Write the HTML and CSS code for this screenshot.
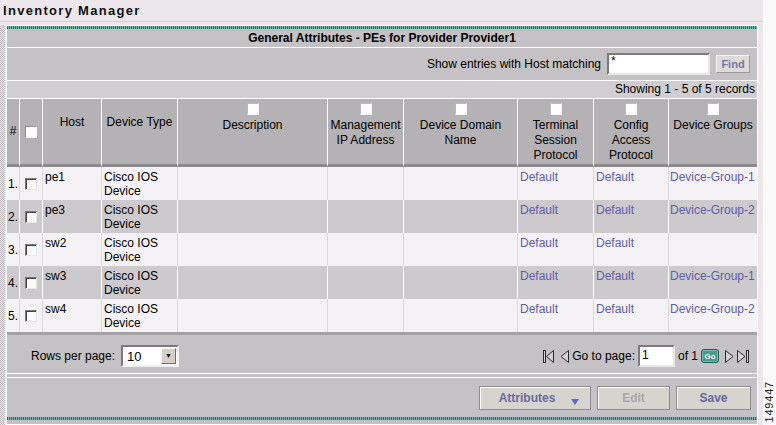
FILE: index.html
```html
<!DOCTYPE html>
<html lang="en">
<head>
    <meta charset="UTF-8">
    <title>Inventory Manager</title>
    <link rel="stylesheet" href="styles.css">
</head>
<body>
    <div class="page">
        <div class="title">Inventory Manager</div>
        <div class="main">
            <div class="rail"></div>
            <div class="panel">
                <div class="stripe"></div>
                <div class="caption">General Attributes - PEs for Provider Provider1</div>
                <div class="search">
                    <label for="host-filter">Show entries with Host matching</label>
                    <input type="text" id="host-filter" class="text-input filter" value="*">
                    <button class="find">Find</button>
                </div>
                <div class="count">Showing 1 - 5 of 5 records</div>

                <table class="grid">
                    <thead>
                        <tr class="head-row">
                            <th class="c-num mid">#</th>
                            <th class="c-sel mid"><span class="cb"></span></th>
                            <th class="c-host plain">Host</th>
                            <th class="c-type plain">Device Type</th>
                            <th class="c-desc"><span class="cb"></span>Description</th>
                            <th class="c-mgmt"><span class="cb"></span>Management<br>IP Address</th>
                            <th class="c-domain"><span class="cb"></span>Device Domain<br>Name</th>
                            <th class="c-term"><span class="cb"></span>Terminal<br>Session<br>Protocol</th>
                            <th class="c-cfg"><span class="cb"></span>Config<br>Access<br>Protocol</th>
                            <th class="c-grp"><span class="cb"></span>Device Groups</th>
                        </tr>
                    </thead>
                    <tbody>
                        <tr class="odd">
                            <td class="num">1.</td>
                            <td class="sel"><span class="cb"></span></td>
                            <td>pe1</td>
                            <td>Cisco IOS Device</td>
                            <td></td><td></td><td></td>
                            <td><a href="#">Default</a></td>
                            <td><a href="#">Default</a></td>
                            <td class="grp"><a href="#">Device-Group-1</a></td>
                        </tr>
                        <tr class="even">
                            <td class="num">2.</td>
                            <td class="sel"><span class="cb"></span></td>
                            <td>pe3</td>
                            <td>Cisco IOS Device</td>
                            <td></td><td></td><td></td>
                            <td><a href="#">Default</a></td>
                            <td><a href="#">Default</a></td>
                            <td class="grp"><a href="#">Device-Group-2</a></td>
                        </tr>
                        <tr class="odd">
                            <td class="num">3.</td>
                            <td class="sel"><span class="cb"></span></td>
                            <td>sw2</td>
                            <td>Cisco IOS Device</td>
                            <td></td><td></td><td></td>
                            <td><a href="#">Default</a></td>
                            <td><a href="#">Default</a></td>
                            <td class="grp"></td>
                        </tr>
                        <tr class="even">
                            <td class="num">4.</td>
                            <td class="sel"><span class="cb"></span></td>
                            <td>sw3</td>
                            <td>Cisco IOS Device</td>
                            <td></td><td></td><td></td>
                            <td><a href="#">Default</a></td>
                            <td><a href="#">Default</a></td>
                            <td class="grp"><a href="#">Device-Group-1</a></td>
                        </tr>
                        <tr class="odd">
                            <td class="num">5.</td>
                            <td class="sel"><span class="cb"></span></td>
                            <td>sw4</td>
                            <td>Cisco IOS Device</td>
                            <td></td><td></td><td></td>
                            <td><a href="#">Default</a></td>
                            <td><a href="#">Default</a></td>
                            <td class="grp"><a href="#">Device-Group-2</a></td>
                        </tr>
                    </tbody>
                </table>

                <div class="pager">
                    <div class="rows-per-page">
                        <span>Rows per page:</span>
                        <span class="select"><span class="select-value">10</span><span class="select-arrow">&#9660;</span></span>
                    </div>
                    <div class="paging">
                        <svg class="nav first" width="11" height="13" viewBox="0 0 11 13">
                            <rect x="0.5" y="0.5" width="2" height="12" fill="#d4d2d4" stroke="#2a2a2a"/>
                            <path d="M10.5 0.5 L3.5 6.5 L10.5 12.5 Z" fill="#d4d2d4" stroke="#2a2a2a"/>
                        </svg>
                        <svg class="nav prev" width="9" height="13" viewBox="0 0 9 13">
                            <path d="M8.5 0.5 L1 6.5 L8.5 12.5 Z" fill="#d4d2d4" stroke="#2a2a2a"/>
                        </svg>
                        <label for="page-no" class="goto">Go to page:</label>
                        <input type="text" id="page-no" class="text-input page-no" value="1">
                        <span class="of">of 1</span>
                        <button class="go">Go</button>
                        <svg class="nav next" width="9" height="13" viewBox="0 0 9 13">
                            <path d="M0.5 0.5 L8 6.5 L0.5 12.5 Z" fill="#d4d2d4" stroke="#2a2a2a"/>
                        </svg>
                        <svg class="nav last" width="15" height="13" viewBox="0 0 15 13">
                            <path d="M0.5 0.5 L8 6.5 L0.5 12.5 Z" fill="#d4d2d4" stroke="#2a2a2a"/>
                            <rect x="9.5" y="0.5" width="2" height="12" fill="#d4d2d4" stroke="#2a2a2a"/>
                        </svg>
                    </div>
                </div>

                <div class="actions">
                    <button class="btn attributes">Attributes
                        <svg class="caret" width="8" height="6" viewBox="0 0 8 6"><path d="M0 0 H8 L4 6 Z" fill="#5470c8"/></svg>
                    </button>
                    <button class="btn edit" disabled>Edit</button>
                    <button class="btn save">Save</button>
                </div>
                <div class="stripe"></div>
            </div>
        </div>
    </div>
    <div class="fig-id">149447</div>
</body>
</html>
```

FILE: styles.css
```css
body {
    margin: 0;
    background: #fafafa;
    font-family: "Liberation Sans", Arial, sans-serif;
    font-size: 12px;
    color: #000;
}
.page {
    width: 763px;
    height: 425px;
    background: #ebe7eb;
}
.title {
    height: 18px;
    padding: 3px 0 0 3px;
    border-bottom: 1px solid #d8cccc;
    font-size: 13px;
    line-height: 15px;
    font-weight: bold;
    letter-spacing: 1.3px;
    color: #111;
}
.main {
    display: flex;
    padding-top: 3px;
}
.rail {
    width: 5px;
    height: 400px;
    background: repeating-conic-gradient(#bdb9bd 0 25%, #ebe7eb 0 50%) 0 0 / 2px 2px;
}
.panel {
    width: 750px;
    margin-left: 1px;
    border: 1px solid #fff;
    background: #c4c2c4;
}
.stripe {
    height: 3px;
    background: repeating-linear-gradient(90deg, #23766b 0 1px, #79b2a9 1px 2px);
}
.caption {
    height: 18px;
    line-height: 18px;
    border-bottom: 1px solid #fff;
    text-align: center;
    font-weight: bold;
}
.search {
    height: 32px;
    border-bottom: 1px solid #fff;
    display: flex;
    align-items: center;
    justify-content: flex-end;
    padding-right: 7px;
}
.text-input {
    box-sizing: border-box;
    height: 22px;
    margin: 0;
    padding: 0 2px;
    border: 2px solid;
    border-color: #7c7a7c #e8e8e8 #e8e8e8 #7c7a7c;
    background: #fff;
    font-family: inherit;
    font-size: 12px;
    outline: none;
}
.filter {
    width: 103px;
    margin-left: 6px;
    padding-bottom: 6px;
}
.find {
    width: 34px;
    height: 18px;
    margin-left: 6px;
    padding: 0;
    border: 1px solid;
    border-color: #f2f2f2 #9c9a9c #9c9a9c #f2f2f2;
    background: #dcdbd7;
    font-family: inherit;
    font-size: 11px;
    font-weight: bold;
    color: #7676a6;
}
.count {
    height: 17px;
    line-height: 17px;
    background: #d0ced0;
    text-align: right;
    padding-right: 2px;
}
.grid {
    width: 750px;
    table-layout: fixed;
    border-collapse: separate;
    border-spacing: 0;
}
.grid th,
.grid td {
    box-sizing: border-box;
    padding: 0 2px;
    border-left: 1px solid #fff;
}
.grid th:first-child,
.grid td:first-child {
    border-left: none;
}
.head-row {
    height: 69px;
}
.grid th {
    background: #b4b2b4;
    border-top: 1px solid #fff;
    border-bottom: 3px solid #8c8a8c;
    font-weight: normal;
    line-height: 15px;
    text-align: center;
    vertical-align: top;
    padding-top: 4px;
}
.grid th.mid {
    vertical-align: middle;
    padding-top: 0;
}
.grid th.plain {
    padding-top: 16px;
}
.c-num { width: 12px; }
.c-sel { width: 23px; }
.c-host { width: 59px; }
.c-type { width: 76px; }
.c-desc { width: 150px; }
.c-mgmt { width: 76px; }
.c-domain { width: 114px; }
.c-term { width: 76px; }
.c-cfg { width: 75px; }
.c-grp { width: 89px; }
.grid th.c-num { padding: 0; }
.cb {
    display: inline-block;
    box-sizing: border-box;
    width: 12px;
    height: 12px;
    vertical-align: middle;
    background: #fafafa;
    border: 1px solid;
    border-color: #7a787a #e6e6e6 #e6e6e6 #7a787a;
    box-shadow: inset 1px 1px #474547;
}
.grid th .cb {
    display: block;
    margin: 0 auto 3px;
    background: #fff;
    border-color: #bcbabc #f4f4f4 #f4f4f4 #bcbabc;
    box-shadow: none;
}
.grid th.mid .cb {
    margin: 0 auto;
    border-color: #8e8c8e #f4f4f4 #f4f4f4 #8e8c8e;
}
.grid tbody tr {
    height: 33px;
}
.grid td {
    vertical-align: top;
    padding-top: 3px;
    line-height: 14px;
}
.grid td.num {
    vertical-align: middle;
    padding: 0 0 0 1px;
}
.grid td.sel {
    vertical-align: middle;
    text-align: center;
    padding: 0;
}
.grid td.grp {
    padding-left: 1px;
    padding-right: 0;
    white-space: nowrap;
}
.odd td {
    background: #f4f2f4;
    border-left-color: #dcd9dc;
}
.even td {
    background: #cccacc;
}
.grid a {
    color: #5e5ea6;
    text-decoration: none;
}
.pager {
    height: 38px;
    border-top: 3px solid #a4a2a4;
    border-bottom: 1px solid #fff;
    display: flex;
    align-items: center;
    justify-content: space-between;
    padding: 0 5px 0 24px;
}
.rows-per-page {
    display: flex;
    align-items: center;
    margin-top: 4px;
}
.select {
    display: flex;
    align-items: center;
    box-sizing: border-box;
    width: 58px;
    height: 22px;
    margin-left: 6px;
    border: 2px solid;
    border-color: #7c7a7c #f0f0f0 #f0f0f0 #7c7a7c;
    background: #fff;
}
.select-value {
    flex: 1;
    padding-left: 4px;
    font-size: 13px;
}
.select-arrow {
    box-sizing: border-box;
    width: 15px;
    height: 16px;
    margin-right: 1px;
    border: 1px solid;
    border-color: #f4f4f4 #6e6c6e #6e6c6e #f4f4f4;
    background: #d4d0c8;
    font-size: 7px;
    line-height: 14px;
    text-align: center;
}
.paging {
    display: flex;
    align-items: center;
    margin-top: 4px;
}
.nav { display: block; }
.prev { margin-left: 6px; }
.goto { margin-left: 3px; }
.page-no {
    width: 37px;
    margin-left: 3px;
    padding-bottom: 2px;
    font-size: 12px;
}
.of { margin-left: 3px; }
.go {
    width: 18px;
    height: 14px;
    margin-left: 3px;
    padding: 0;
    border: 1px solid #1d5a53;
    border-radius: 3px;
    background: #4a978d;
    box-shadow: inset 0 0 0 1px #7cc0b5;
    font-family: inherit;
    font-size: 8px;
    font-weight: bold;
    line-height: 11px;
    color: #e4f6f2;
}
.next { margin-left: 6px; }
.last { margin-left: 3px; }
.actions {
    height: 31px;
    margin-top: 3px;
    border-top: 1px solid #fff;
    display: flex;
    justify-content: flex-end;
    gap: 6px;
    padding: 8px 6px 0 0;
}
.btn {
    box-sizing: border-box;
    height: 24px;
    padding: 0;
    border: 1px solid #8e8c8e;
    box-shadow: inset 1px 1px #fbfbfb;
    background: #d6d4cf;
    font-family: inherit;
    font-size: 12px;
    font-weight: bold;
    color: #6a6a9c;
}
.attributes {
    width: 112px;
    display: flex;
    align-items: center;
    justify-content: center;
    padding-left: 8px;
}
.caret {
    margin: 7px 0 0 16px;
}
.edit {
    width: 73px;
    color: #a9a8a9;
}
.save {
    width: 75px;
    color: #6666a0;
}
.fig-id {
    position: absolute;
    left: 764px;
    top: 381px;
    writing-mode: vertical-rl;
    transform: rotate(180deg);
    font-size: 11px;
    line-height: 11px;
    letter-spacing: 0.8px;
    color: #222;
}
```
